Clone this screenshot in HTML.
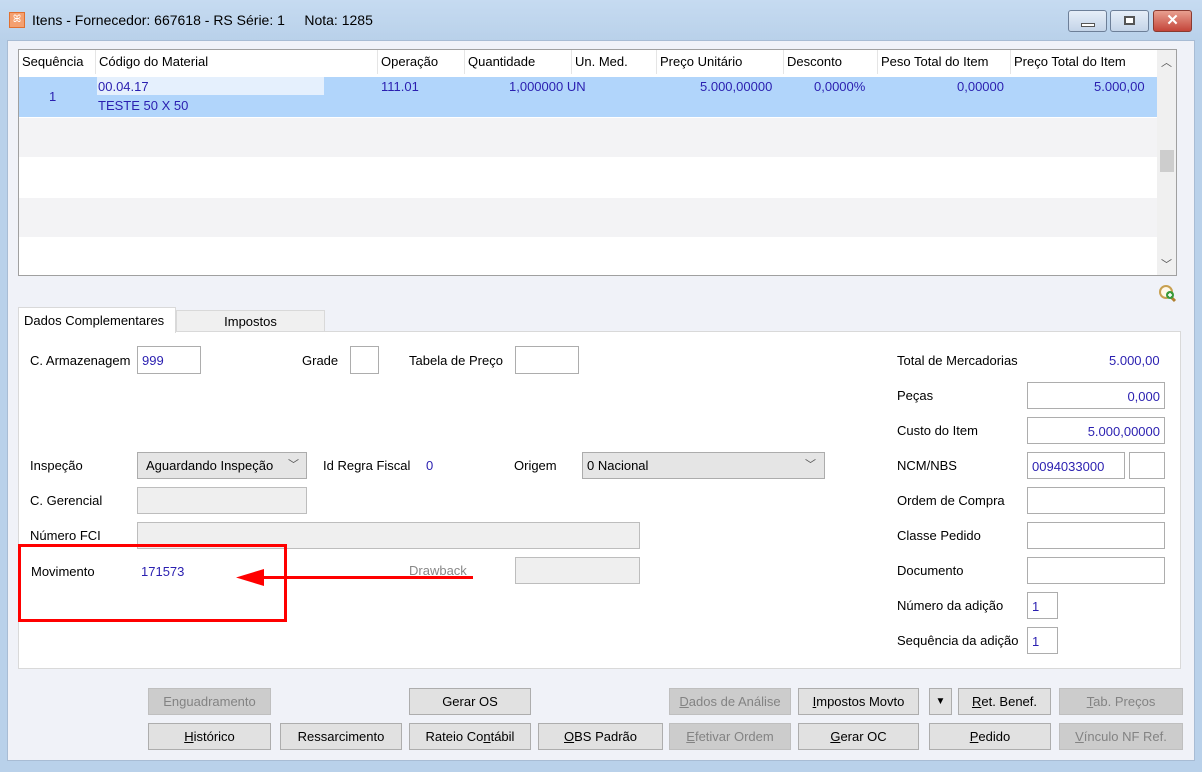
<!DOCTYPE html>
<html><head><meta charset="utf-8"><style>
*{box-sizing:border-box;margin:0;padding:0}
body{width:1202px;height:772px;overflow:hidden;background:#b9d1ea;font-family:"Liberation Sans",sans-serif;font-size:13px;color:#000;position:relative}
.a{position:absolute;white-space:nowrap}
.title{left:0;top:0;width:1202px;height:40px;background:linear-gradient(#c6dbf1,#b9d1ea)}
.body{left:7px;top:40px;width:1188px;height:721px;background:#f0f2f8;border:1px solid #a8bcd4}
.inp{position:absolute;background:#fff;border:1px solid #adadad;color:#2a1fb0;font-size:13px;padding:5px 4px 0;line-height:18px}
.dis{position:absolute;background:#efefef;border:1px solid #bdbdbd}
.btn{position:absolute;height:27px;border:1px solid #adadad;background:#e1e1e1;text-align:center;line-height:25px;font-size:13px}
.btn.d{background:#cccccc;border-color:#bfbfbf;color:#838383}
.blue{color:#2a1fb0}
.h{position:absolute;top:0;height:24px;line-height:24px;padding-left:3px;border-left:1px solid #e5e5e5}
u{text-decoration:underline}
</style></head><body>
<div class="a title"></div>
<div class="a" style="left:9px;top:12px;width:16px;height:16px;background:#f4a070;border:1px solid #e07030;color:#fff;font-size:10px;line-height:14px;text-align:center">ꕤ</div>
<div class="a" style="left:32px;top:12px;font-size:14px">Itens - Fornecedor: 667618 - RS Série: 1&nbsp;&nbsp;&nbsp;&nbsp;&nbsp;Nota: 1285</div>
<div class="a" style="left:1068px;top:10px;width:39px;height:22px;border:1px solid #6d7f98;border-radius:3px;background:linear-gradient(#e6eef8,#c4d4e8)"><div style="margin:12px auto 0;width:14px;height:4px;background:#fff;border:1px solid #555"></div></div>
<div class="a" style="left:1110px;top:10px;width:39px;height:22px;border:1px solid #6d7f98;border-radius:3px;background:linear-gradient(#e6eef8,#c4d4e8)"><div style="margin:5px auto 0;width:11px;height:9px;background:#fff;border:2px solid #555"></div></div>
<div class="a" style="left:1153px;top:10px;width:39px;height:22px;border:1px solid #8a3a30;border-radius:3px;background:linear-gradient(#e8a090,#c4453a);color:#fff;font-weight:bold;text-align:center;line-height:20px;font-size:15px">✕</div>
<div class="a body"></div>

<div class="a" style="left:18px;top:49px;width:1159px;height:227px;background:#fff;border:1px solid #a0a0a0;overflow:hidden">
 <div class="a" style="left:0;top:0;width:1138px;height:26px;background:#fff;font-size:13px">
  <div class="h" style="left:0;border:none">Sequência</div><div class="h" style="left:76px">Código do Material</div><div class="h" style="left:358px">Operação</div><div class="h" style="left:445px">Quantidade</div><div class="h" style="left:552px">Un. Med.</div><div class="h" style="left:637px">Preço Unitário</div><div class="h" style="left:764px">Desconto</div><div class="h" style="left:858px">Peso Total do Item</div><div class="h" style="left:991px">Preço Total do Item</div>
 </div>
 <div class="a" style="left:0;top:27px;width:1138px;height:40px;background:#b1d5fb"></div>
 <div class="a" style="left:78px;top:27px;width:227px;height:18px;background:#e5f0fd"></div>
 <div class="a blue" style="left:30px;top:39px">1</div>
 <div class="a blue" style="left:79px;top:29px">00.04.17</div>
 <div class="a blue" style="left:79px;top:48px">TESTE 50 X 50</div>
 <div class="a blue" style="left:362px;top:29px">111.01</div>
 <div class="a blue" style="left:490px;top:29px">1,000000 UN</div>
 <div class="a blue" style="left:681px;top:29px">5.000,00000</div>
 <div class="a blue" style="left:795px;top:29px">0,0000%</div>
 <div class="a blue" style="left:938px;top:29px">0,00000</div>
 <div class="a blue" style="left:1075px;top:29px">5.000,00</div>
 <div class="a" style="left:0;top:68px;width:1138px;height:39px;background:#f3f3f5"></div>
 <div class="a" style="left:0;top:148px;width:1138px;height:39px;background:#f3f3f5"></div>
 <div class="a" style="left:1138px;top:0;width:19px;height:225px;background:#f0f0f0"></div>
 <div class="a" style="left:1141px;top:100px;width:14px;height:22px;background:#cdcdcd"></div>
 <div class="a" style="left:1142px;top:4px;font-size:11px;color:#555">︿</div>
 <div class="a" style="left:1142px;top:206px;font-size:11px;color:#555">﹀</div>
</div>
<svg class="a" style="left:1158px;top:284px" width="22" height="20"><circle cx="8" cy="8" r="6" fill="#fff8e8" stroke="#c8a050" stroke-width="2"/><line x1="12" y1="12" x2="17" y2="17" stroke="#b08030" stroke-width="3"/><circle cx="12" cy="11" r="4" fill="#3a9a3a"/><path d="M10 11h4M12 9v4" stroke="#fff" stroke-width="1.5"/></svg>

<div class="a" style="left:176px;top:310px;width:149px;height:22px;background:#f0f0f0;border:1px solid #d9d9d9;text-align:center;line-height:22px">Impostos</div>
<div class="a" style="left:18px;top:331px;width:1163px;height:338px;background:#fff;border:1px solid #d9d9d9"></div>
<div class="a" style="left:18px;top:307px;width:158px;height:26px;background:#fff;border:1px solid #d9d9d9;border-bottom:none;padding:5px 0 0 5px">Dados Complementares</div>

<div class="a" style="left:30px;top:353px">C. Armazenagem</div>
<div class="inp" style="left:137px;top:346px;width:64px;height:28px">999</div>
<div class="a" style="left:302px;top:353px">Grade</div>
<div class="inp" style="left:350px;top:346px;width:29px;height:28px"></div>
<div class="a" style="left:409px;top:353px">Tabela de Preço</div>
<div class="inp" style="left:515px;top:346px;width:64px;height:28px"></div>

<div class="a" style="left:30px;top:458px">Inspeção</div>
<div class="dis" style="left:137px;top:452px;width:170px;height:27px;background:#e5e5e5;border-color:#acacac;padding:5px 8px">Aguardando Inspeção <span style="position:absolute;left:150px;top:3px;font-size:11px;color:#555">﹀</span></div>
<div class="a" style="left:323px;top:458px">Id Regra Fiscal</div>
<div class="a blue" style="left:426px;top:458px">0</div>
<div class="a" style="left:514px;top:458px">Origem</div>
<div class="dis" style="left:582px;top:452px;width:243px;height:27px;background:#e5e5e5;border-color:#acacac;padding:5px 4px">0 Nacional <span style="position:absolute;left:222px;top:3px;font-size:11px;color:#555">﹀</span></div>

<div class="a" style="left:30px;top:493px">C. Gerencial</div>
<div class="dis" style="left:137px;top:487px;width:170px;height:27px"></div>
<div class="a" style="left:30px;top:528px">Número FCI</div>
<div class="dis" style="left:137px;top:522px;width:503px;height:27px"></div>
<div class="a" style="left:31px;top:564px">Movimento</div>
<div class="a blue" style="left:141px;top:564px">171573</div>
<div class="a" style="left:409px;top:563px;color:#888;text-decoration:underline">Drawback</div>
<div class="dis" style="left:515px;top:557px;width:125px;height:27px"></div>
<div class="a" style="left:18px;top:544px;width:269px;height:78px;border:3px solid #f00"></div>
<div class="a" style="left:255px;top:576px;width:218px;height:3px;background:#f00"></div>
<svg class="a" style="left:236px;top:569px" width="28" height="17"><polygon points="0,8.5 28,0 28,17" fill="#f00"/></svg>

<div class="a" style="left:897px;top:353px">Total de Mercadorias</div>
<div class="a blue" style="left:1109px;top:353px">5.000,00</div>
<div class="a" style="left:897px;top:388px">Peças</div>
<div class="inp" style="left:1027px;top:382px;width:138px;height:27px;text-align:right">0,000</div>
<div class="a" style="left:897px;top:423px">Custo do Item</div>
<div class="inp" style="left:1027px;top:417px;width:138px;height:27px;text-align:right">5.000,00000</div>
<div class="a" style="left:897px;top:458px">NCM/NBS</div>
<div class="inp" style="left:1027px;top:452px;width:98px;height:27px">0094033000</div>
<div class="inp" style="left:1129px;top:452px;width:36px;height:27px"></div>
<div class="a" style="left:897px;top:493px">Ordem de Compra</div>
<div class="inp" style="left:1027px;top:487px;width:138px;height:27px"></div>
<div class="a" style="left:897px;top:528px">Classe Pedido</div>
<div class="inp" style="left:1027px;top:522px;width:138px;height:27px"></div>
<div class="a" style="left:897px;top:563px">Documento</div>
<div class="inp" style="left:1027px;top:557px;width:138px;height:27px"></div>
<div class="a" style="left:897px;top:598px">Número da adição</div>
<div class="inp" style="left:1027px;top:592px;width:31px;height:27px">1</div>
<div class="a" style="left:897px;top:633px">Sequência da adição</div>
<div class="inp" style="left:1027px;top:627px;width:31px;height:27px">1</div>

<div class="btn d" style="left:148px;top:688px;width:123px">En<u>g</u>uadramento</div>
<div class="btn" style="left:409px;top:688px;width:122px">Gerar OS</div>
<div class="btn d" style="left:669px;top:688px;width:122px"><u>D</u>ados de Análise</div>
<div class="btn" style="left:798px;top:688px;width:121px"><u>I</u>mpostos Movto</div>
<div class="btn" style="left:929px;top:688px;width:23px;font-size:10px">▼</div>
<div class="btn" style="left:958px;top:688px;width:93px"><u>R</u>et. Benef.</div>
<div class="btn d" style="left:1059px;top:688px;width:124px"><u>T</u>ab. Preços</div>
<div class="btn" style="left:148px;top:723px;width:123px"><u>H</u>istórico</div>
<div class="btn" style="left:280px;top:723px;width:122px">Ressarcimento</div>
<div class="btn" style="left:409px;top:723px;width:122px">Rateio Co<u>n</u>tábil</div>
<div class="btn" style="left:538px;top:723px;width:125px"><u>O</u>BS Padrão</div>
<div class="btn d" style="left:669px;top:723px;width:122px"><u>E</u>fetivar Ordem</div>
<div class="btn" style="left:798px;top:723px;width:121px"><u>G</u>erar OC</div>
<div class="btn" style="left:929px;top:723px;width:122px"><u>P</u>edido</div>
<div class="btn d" style="left:1059px;top:723px;width:124px"><u>V</u>ínculo NF Ref.</div>
</body></html>
